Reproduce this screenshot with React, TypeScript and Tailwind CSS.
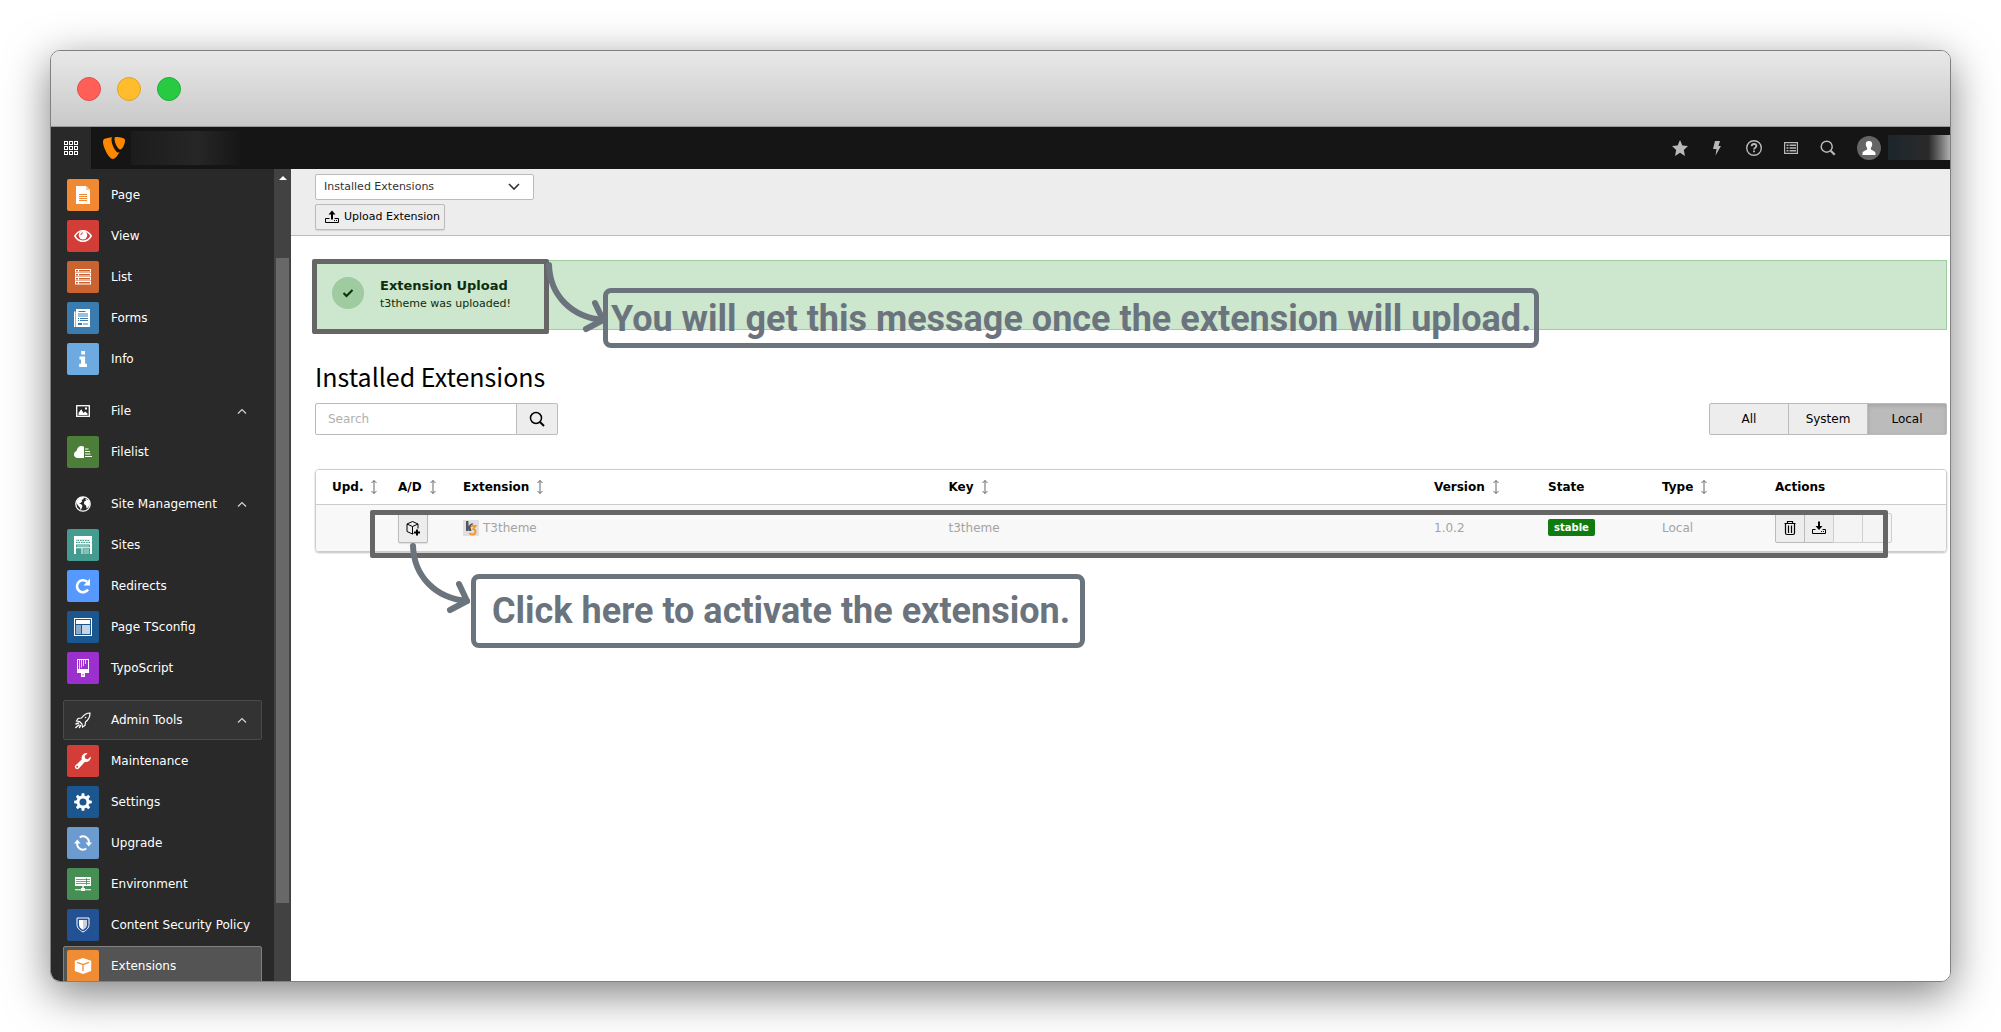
import type { ReactNode } from 'react'
import { clsx } from 'clsx'

function Svg({ size = 16, box = 16, className, children }: { size?: number; box?: number; className?: string; children: ReactNode }) {
  return (
    <svg width={size} height={size} viewBox={`0 0 ${box} ${box}`} fill="currentColor" className={clsx('shrink-0', className)} aria-hidden="true">
      {children}
    </svg>
  )
}

/* ---------- module icons, 18x18 ---------- */

const PageIcon = (
  <>
    <path d="M2 0h10l4 4v14H2z" />
    <path d="M12 0v4h4z" fill="#f8c79b" />
    <path d="M5 8.500h8M5 10.500h8M5 12.500h8M5 14.500h8" stroke="#f18832" strokeWidth="1" />
  </>
)

const ViewIcon = (
  <>
    <path d="M.8 9C3 5.300 5.800 3.800 9 3.800S15 5.300 17.200 9C15 12.700 12.200 14.200 9 14.200S3 12.700.8 9z" fill="none" stroke="currentColor" strokeWidth="1.500" />
    <circle cx="9" cy="8.200" r="4.200" />
    <path d="M6.800 8A2.300 2.300 0 0 1 9 5.800" fill="none" stroke="#d33d37" strokeWidth="1" />
  </>
)

const ListIcon = (
  <>
    {[1.5, 5.5, 9.5, 13.5].map((y) => (
      <g key={y}>
        <rect x="1.500" y={y} width="15" height="2.500" fill="none" stroke="currentColor" />
        <path d={`M4.500 ${y}v2.500`} stroke="currentColor" />
      </g>
    ))}
  </>
)

const FormsIcon = (
  <>
    <path d="M0 2.500h1.500V18H0zM2 0h14v18H2z" />
    <path d="M4.500 2.500h7" stroke="#3b7cb0" />
    <path d="M4 4h10v4H4z" fill="#9dbfd9" />
    <path d="M4 9.500h1M6 9.500h8M4 11.500h1M6 11.500h8" stroke="#3b7cb0" />
    <path d="M4 14h4v2H4z" fill="#3b7cb0" />
    <path d="M9 14h5v2H9z" fill="#9dbfd9" />
  </>
)

const InfoIcon = <path d="M7.200 1h3.800v3.600H7.200zM5.500 6.500h5.600v7.300h1.800V17H5.200v-3.200h1.900V9.600H5.500z" />

const FileIcon = (
  <>
    <rect x="2.700" y="3.700" width="12.600" height="10.600" fill="none" stroke="currentColor" strokeWidth="1.300" />
    <path d="M4.500 13V11l2.700-3.700L9.500 11l1.600-1.500 2.400 2V13z" />
    <path d="M11 5.500h2v2h-2z" />
  </>
)

const FilelistIcon = (
  <>
    <path d="M10 15H3.500A3.500 3.500 0 0 1 .8 9.200C1.500 8.300 2 8.200 2.600 8 2.800 5 5 3 7.500 3c1 0 1.800.3 2.500.8z" />
    <path d="M11 6h3.500M11 8.500h5M11 11h5.500M11 13.500h7" stroke="currentColor" strokeWidth="1.200" />
  </>
)

const GlobeIcon = (
  <>
    <circle cx="9" cy="9" r="7.200" fill="none" stroke="currentColor" strokeWidth="1.300" />
    <path d="M3 5.500 6 2.500l4-.5-.5 2L7.500 5l.8 1.200L6.500 8 5 8.300 7.500 9.500l1 1.500-1.700 4.500-1-3L4 10.500 2.500 8z" />
    <path d="m11 3.500 4 2L16 9l-1.500 3-1.800 1.500-.7-3L10 9l.2-2.500 2-1z" />
  </>
)

const SitesIcon = (
  <>
    <path d="M0 0h18v3H0z" />
    <path d="M0 3h18v5H0z" opacity=".85" />
    <path d="M1 4.500h16M2 6.500h14" stroke="#449c90" strokeDasharray="1.500 1" />
    <path d="M0 3h2v15H0zM16 3h2v15h-2zM2 7h14v1.500H2z" />
    <path d="M3 8.500h12V11H3z" fill="#86c0b8" />
    <path d="M2 11.300h14v1H2zM7.500 12h1v6h-1z" />
    <path d="M9.500 13H15v5H9.500z" fill="#86c0b8" />
  </>
)

const RedirectIcon = (
  <>
    <path d="M14 12.500A6 6 0 1 1 13 4.800" fill="none" stroke="currentColor" strokeWidth="2.600" />
    <path d="M16 1.500v7H9.500z" />
  </>
)

const TsconfigIcon = (
  <>
    <rect x=".5" y=".5" width="17" height="17" fill="none" stroke="currentColor" />
    <path d="M2 2h14v4H2z" />
    <path d="M2 7h5v9H2z" fill="#8dabc9" />
    <path d="M8 7h8v9H8z" fill="#c6d5e4" />
  </>
)

const TyposcriptIcon = (
  <>
    <rect x="3.500" y=".5" width="11" height="12" fill="none" stroke="currentColor" />
    <path d="M5.500 1v9M7.500 1v7.500M9.500 1v6M11.500 1v4" stroke="currentColor" opacity=".8" />
    <path d="M3 10h12v4H3zM7 14h4v4H7z" />
    <path d="M8.500 15h1v1.500h-1z" fill="#9b30cf" />
  </>
)

const RocketIcon = (
  <>
    <path d="M16 2c-3.500 0-6 1.500-8.500 5L4 7.500 2.500 10l3 .5 2.500 2.500.5 3L11 14.500l.5-3.500C15 8.500 16 5.500 16 2zM5.500 10.500 8 13" fill="none" stroke="currentColor" strokeWidth="1.200" />
    <path d="M11.500 6.500h.1M4.500 12l-2.500 1M5 14l-3.200 2.500M6.500 14.500l-1 2" stroke="currentColor" strokeWidth="1.400" strokeLinecap="round" />
  </>
)

const WrenchIcon = (
  <path d="M16.800 4.600 13.800 7.300l-2.700-.9-.4-2.500L13.600 1.200A5 5 0 0 0 7.800 7.600L1.600 13.200a2.200 2.200 0 0 0 3.200 3.200l6-6.400a5 5 0 0 0 6-5.400zM3.200 15.800a1 1 0 1 1 0-2 1 1 0 0 1 0 2z" />
)

const GearIcon = (
  <>
    <circle cx="9" cy="9" r="5" fill="none" stroke="currentColor" strokeWidth="3" />
    {[0, 45, 90, 135, 180, 225, 270, 315].map((a) => (
      <path key={a} d="M7.300 3.300 7.700.2h2.600l.4 3.100z" transform={`rotate(${a} 9 9)`} />
    ))}
  </>
)

const UpgradeIcon = (
  <>
    <path d="M3.300 8.500a5.800 5.800 0 0 0 9 6M14.700 9.500a5.800 5.800 0 0 0-9-6" fill="none" stroke="currentColor" strokeWidth="2" />
    <path d="m3.300 5.500 3.300 4H0zM14.700 12.500l-3.300-4H18z" />
  </>
)

const EnvironmentIcon = (
  <>
    <path d="M1 2h16v9H1z" />
    <path d="M2 4.500h14M2 6.500h14M2 8.500h14M12.500 3v7" stroke="#458f54" strokeWidth=".8" />
    <path d="M8.300 11h1.400v3H8.300zM1 14.200h16v1H1zM7 13h4v3H7z" />
  </>
)

const ShieldIcon = (
  <>
    <path d="M3 2h12v6.500c0 3.500-2.500 5.700-6 7.500-3.500-1.800-6-4-6-7.500z" fill="none" stroke="currentColor" />
    <path d="M5 4h4v10c-2.500-1.500-4-3-4-5.500z" />
    <path d="M9 4h4v4.500c0 2.500-1.500 4-4 5.500z" opacity=".75" />
  </>
)

const BoxIcon = (
  <>
    <path d="M9 1 17.200 3.700V14L9 17 .8 14V3.700z" />
    <path d="M3 5.300 9 7.500l6-2.200M9 7.500v6.500" fill="none" stroke="#f08c33" strokeWidth="1.300" />
  </>
)

type Item = { label: string; icon: ReactNode; tile?: string; active?: boolean }
type Group = { head?: Item; items: Item[] }

const GROUPS: Group[] = [
  {
    items: [
      { label: 'Page', icon: PageIcon, tile: 'bg-[#f18832]' },
      { label: 'View', icon: ViewIcon, tile: 'bg-[#d33d37]' },
      { label: 'List', icon: ListIcon, tile: 'bg-[#cb6331]' },
      { label: 'Forms', icon: FormsIcon, tile: 'bg-[#3b7cb0]' },
      { label: 'Info', icon: InfoIcon, tile: 'bg-[#6daae0]' },
    ],
  },
  {
    head: { label: 'File', icon: FileIcon },
    items: [{ label: 'Filelist', icon: FilelistIcon, tile: 'bg-[#4c7e3a]' }],
  },
  {
    head: { label: 'Site Management', icon: GlobeIcon },
    items: [
      { label: 'Sites', icon: SitesIcon, tile: 'bg-[#449c90]' },
      { label: 'Redirects', icon: RedirectIcon, tile: 'bg-[#5599ff]' },
      { label: 'Page TSconfig', icon: TsconfigIcon, tile: 'bg-[#1b568f]' },
      { label: 'TypoScript', icon: TyposcriptIcon, tile: 'bg-[#9b30cf]' },
    ],
  },
  {
    head: { label: 'Admin Tools', icon: RocketIcon, active: true },
    items: [
      { label: 'Maintenance', icon: WrenchIcon, tile: 'bg-[#d33d37]' },
      { label: 'Settings', icon: GearIcon, tile: 'bg-[#1b568f]' },
      { label: 'Upgrade', icon: UpgradeIcon, tile: 'bg-[#6b9bcf]' },
      { label: 'Environment', icon: EnvironmentIcon, tile: 'bg-[#458f54]' },
      { label: 'Content Security Policy', icon: ShieldIcon, tile: 'bg-[#225194]' },
      { label: 'Extensions', icon: BoxIcon, tile: 'bg-[#f08c33]', active: true },
    ],
  },
]

function MenuHead({ label, icon, active }: Item) {
  return (
    <button
      type="button"
      className={clsx(
        'flex h-10 w-full items-center gap-3 rounded-xs border px-[3px] text-left',
        active ? 'border-[#4a4a4a] bg-[#333333]' : 'border-transparent'
      )}
    >
      <span className="flex size-8 items-center justify-center">
        <Svg size={18} box={18}>{icon}</Svg>
      </span>
      <span className="flex-1">{label}</span>
      <Svg size={10} box={10} className="mr-[11px] text-gray-300">
        <path d="M1 7.500 5 3.500l4 4" fill="none" stroke="currentColor" strokeWidth="1.200" />
      </Svg>
    </button>
  )
}

function MenuItem({ label, icon, tile, active }: Item) {
  return (
    <a
      href="#"
      className={clsx(
        'flex h-10 items-center gap-3 rounded-xs border px-[3px]',
        active ? 'border-[#808080] bg-[#545454]' : 'border-transparent'
      )}
    >
      <span className={clsx('flex size-8 items-center justify-center rounded-xs text-white', tile)}>
        <Svg size={18} box={18}>{icon}</Svg>
      </span>
      {label}
    </a>
  )
}

function Sidebar() {
  return (
    <aside className="flex w-[240px] shrink-0 bg-[#292929] text-xs text-white">
      <nav className="flex flex-1 flex-col gap-3 overflow-hidden px-3 pt-1.5">
        {GROUPS.map((g, i) => (
          <div key={i} className="flex flex-col gap-px">
            {g.head && <MenuHead {...g.head} />}
            {g.items.map((item) => (
              <MenuItem key={item.label} {...item} />
            ))}
          </div>
        ))}
      </nav>
      {/* Scrollbar */}
      <div className="flex w-[17px] flex-col items-center bg-[#424242] pt-1.5">
        <Svg size={8} box={8} className="text-white">
          <path d="M0 5h8L4 1z" />
        </Svg>
        <div className="mt-[75px] h-[80%] w-[13px] bg-[#686868]" />
      </div>
    </aside>
  )
}

function Topbar() {
  const tool = 'flex w-[37px] items-center justify-center pb-px'
  return (
    <header className="flex h-[42px] shrink-0 items-stretch bg-[#151515] text-[#b9b9b9]">
      <button type="button" aria-label="Toggle menu" className="flex w-10 items-center justify-center bg-[#292929] pb-px text-white">
        <Svg size={14} box={14}>
          {[0.5, 5.5, 10.5].map((y) =>
            [0.5, 5.5, 10.5].map((x) => (
              <rect key={`${x}-${y}`} x={x} y={y} width="3" height="3" fill="none" stroke="currentColor" />
            ))
          )}
        </Svg>
      </button>
      <a href="#" aria-label="TYPO3" className="ml-3 flex items-center text-[#ff8700]">
        <Svg size={22} box={22}>
          <path d="M1 2C3 1 6 .5 9.500.2 8.500 1 8.500 1.800 8.500 3c0 4 4 12.500 6.500 12.500l1.500-.2C14.500 19 12 22 9.800 22 6 22 0 10 0 5 0 3.500.5 2.500 1 2z" />
          <path d="M13 0c4.500 0 9 .8 9 3.200 0 4.300-3 9.300-4.700 9.300C14.500 12.500 11.500 5 11.500 2 11.500.5 12 0 13 0z" />
        </Svg>
      </a>
      <div className="my-1 ml-1.5 w-28 bg-linear-to-r from-[#1c1c1c] via-[#262626] via-60% to-[#151515]" />
      <div className="ml-auto flex">
        <button type="button" aria-label="Bookmarks" className={tool}>
          <Svg>
            <path d="m8 0 2.400 5.500 5.600.6-4.200 3.800L13 16l-5-3.200L3 16l1.200-6.100L0 6.100l5.600-.6z" />
          </Svg>
        </button>
        <button type="button" aria-label="Clear cache" className={tool}>
          <Svg>
            <path d="M6 1h5L9.500 6H12L6.500 15.500 7.500 9H4z" />
          </Svg>
        </button>
        <button type="button" aria-label="Help" className={tool}>
          <Svg>
            <circle cx="8" cy="8" r="7.300" fill="none" stroke="currentColor" strokeWidth="1.400" />
            <path d="M5.700 6.300C5.700 4.800 6.600 4 8 4s2.400.8 2.400 2.100C10.400 7.600 8 7.700 8 9.600" fill="none" stroke="currentColor" strokeWidth="1.800" />
            <path d="M7.100 10.600h1.800v1.700H7.100z" />
          </Svg>
        </button>
        <button type="button" aria-label="Application information" className={tool}>
          <Svg>
            <rect x="1.600" y="2.600" width="12.800" height="10.800" fill="none" stroke="currentColor" strokeWidth="1.200" />
            <path d="M3.500 5.300h2M6.500 5.300h6.500M3.500 8h2M6.500 8h6.500M3.500 10.700h2M6.500 10.700h6.500" stroke="currentColor" strokeWidth="1.400" />
          </Svg>
        </button>
        <button type="button" aria-label="Search" className={tool}>
          <Svg>
            <circle cx="6.700" cy="6.700" r="5.500" fill="none" stroke="currentColor" strokeWidth="1.500" />
            <path d="m10.700 10.700 4 4" stroke="currentColor" strokeWidth="2.200" />
          </Svg>
        </button>
        <button type="button" aria-label="User" className="flex items-center pb-px pl-[11px]">
          <span className="mr-[7px] flex size-6 items-center justify-center rounded-full bg-[#656565] text-white">
            <Svg size={14} box={14}>
              <path d="M7 0c2 0 3.200 1.200 3.200 3.200 0 1.500-.5 2.600-1.300 3.500v1.500c0 1 4.600 1.300 4.600 4.300V14H.5v-1.500c0-3 4.600-3.300 4.600-4.300V6.700C4.300 5.800 3.800 4.700 3.800 3.200 3.800 1.200 5 0 7 0z" />
            </Svg>
          </span>
          <span className="h-[25px] w-[62px] bg-linear-to-r from-[#1d262b] via-[#2a2a2a] via-65% to-[#b0b0b0]" />
        </button>
      </div>
    </header>
  )
}

const trayButton = 'rounded-xs border border-[#bbbbbb] bg-[#ededed] text-black shadow-[0_1px_1px_rgba(0,0,0,0.1)]'

function DocHeader() {
  return (
    <div className="flex flex-col items-start gap-1 border-b border-[#bbbbbb] bg-[#ededed] py-[5px] pl-6 text-[11px]">
      <div className="relative">
        <select aria-label="Module view" className="h-[26px] w-[219px] appearance-none rounded-xs border border-[#bbbbbb] bg-white pl-2 text-[#333333]">
          <option>Installed Extensions</option>
        </select>
        <Svg size={12} box={12} className="pointer-events-none absolute top-[7px] right-3.5 text-[#333333]">
          <path d="m1 3 5 5 5-5" fill="none" stroke="currentColor" strokeWidth="1.600" />
        </Svg>
      </div>
      <button type="button" className={clsx(trayButton, 'flex h-[26px] items-center gap-1 pr-1 pl-2')}>
        <Svg>
          <path d="M8 1.500 4.500 5.500H7v5h2v-5h2.500z" />
          <path d="M5.500 9.500h-4v4h13v-4h-4M10 11.500h1M12 11.500h1" fill="none" stroke="currentColor" />
        </Svg>
        Upload Extension
      </button>
    </div>
  )
}

/* ---------- annotations drawn over the page ---------- */

function Highlight({ className }: { className: string }) {
  return <div className={clsx('pointer-events-none absolute rounded-xs border-[5px] border-[#666666]', className)} />
}

function Callout({ className, children }: { className: string; children: ReactNode }) {
  return (
    <div
      className={clsx(
        "absolute flex items-center rounded-lg border-[5px] border-[#6b747d] font-['Roboto',sans-serif] text-4xl font-bold whitespace-nowrap text-[#6b747d]",
        className
      )}
    >
      {children}
    </div>
  )
}

function Arrow({ className }: { className: string }) {
  return (
    <svg width="66" height="74" viewBox="0 0 66 74" fill="none" stroke="#6b747d" strokeWidth="6" strokeLinecap="round" className={clsx('absolute', className)} aria-hidden="true">
      <path d="M4 4C5 34 26 56 58 59" />
      <path d="M50 42 58 59 41 68" strokeLinejoin="round" />
    </svg>
  )
}

function Flash() {
  return (
    <div className="relative mt-6 h-[70px] border border-[#9fcca0] bg-[#cde6ce]">
      <div role="status" className="flex items-start gap-4 p-4 text-[#0b2e0c]">
        <span className="flex size-8 items-center justify-center rounded-full bg-[#9ecb9f]">
          <Svg size={12} box={12}>
            <path d="m1.500 6 3 3L10.500 3" fill="none" stroke="currentColor" strokeWidth="2" />
          </Svg>
        </span>
        <div>
          <div className="text-[13px] leading-[18px] font-bold">Extension Upload</div>
          <div className="text-[11px] leading-[18px]">t3theme was uploaded!</div>
        </div>
      </div>
      <Highlight className="-top-0.5 -left-1 h-[75px] w-[237px]" />
      <Arrow className="top-0 left-[229px]" />
      <Callout className="top-[27px] left-[287px] h-[60px] px-[3px] pt-0.5">You will get this message once the extension will upload.</Callout>
    </div>
  )
}

const COLUMNS = [
  { label: 'Upd.', sort: true, className: 'w-[74px] pl-4' },
  { label: 'A/D', sort: true, className: 'w-[65px] pl-2' },
  { label: 'Extension', sort: true, className: 'pl-2' },
  { label: 'Key', sort: true, className: 'pl-2' },
  { label: 'Version', sort: true, className: 'w-[114px] pl-2' },
  { label: 'State', sort: false, className: 'w-[114px] pl-2' },
  { label: 'Type', sort: true, className: 'w-[113px] pl-2' },
  { label: 'Actions', sort: false, className: 'w-[179px] pl-2' },
]

function ExtensionTable() {
  const action = 'flex h-[30px] w-[30px] items-center justify-center border border-[#bbbbbb]'
  return (
    <div className="relative mt-[34px]">
      <div className="overflow-hidden rounded-sm border border-[#cccccc] shadow-[0_1px_2px_rgba(0,0,0,0.25)]">
        <table className="w-full table-fixed border-collapse text-left text-xs">
          <thead>
            <tr className="h-[34px] border-b border-[#cccccc] bg-white">
              {COLUMNS.map((c) => (
                <th key={c.label} className={clsx('font-bold text-black', c.className)}>
                  <span className="flex items-center gap-[3px]">
                    {c.label}
                    {c.sort && (
                      <Svg className="text-[#666666]">
                        <path d="M8 1.500v13M5.500 4 8 1.500 10.500 4M5.500 12 8 14.500l2.500-2.500" fill="none" stroke="currentColor" />
                      </Svg>
                    )}
                  </span>
                </th>
              ))}
            </tr>
          </thead>
          <tbody>
            <tr className="h-[47px] bg-[#f8f8f8] text-[#a3a3a3]">
              <td />
              <td className="pl-2">
                <button type="button" aria-label="Activate" className={clsx(trayButton, 'flex size-[30px] items-center justify-center')}>
                  <Svg>
                    <path d="M8.500 13.500 7.500 14 2 11.500V4l5.500-2.500L13 4v4.500M2 4l5.500 2.500L13 4M7.500 6.500V14" fill="none" stroke="currentColor" />
                    <path d="M11 9.500h2v2h2v2h-2v2h-2v-2H9v-2h2z" />
                  </Svg>
                </button>
              </td>
              <td className="pl-2">
                <span className="flex items-center gap-1">
                  <Svg>
                    <path d="M0 0h16v16H0z" fill="#e0e0e2" />
                    <path d="M3 1h2.500v5L8 3.500h2.500L7.500 7l1 4H6L5.500 9v2H3z" fill="#55565a" />
                    <path d="M8 6h4.500L10.300 9c1.700.5 2.200 1.300 2.200 2.700 0 1.800-1.300 2.800-3.200 2.800-1.300 0-2.300-.5-3-1.500" fill="none" stroke="#f59a2a" strokeWidth="2" />
                  </Svg>
                  <span>T3theme</span>
                </span>
              </td>
              <td className="pl-2">t3theme</td>
              <td className="pl-2">1.0.2</td>
              <td className="pl-2">
                <span className="inline-block rounded-xs bg-[#107c10] px-1.5 text-[10px] leading-[17px] font-bold text-white">stable</span>
              </td>
              <td className="pl-2">Local</td>
              <td className="pl-2">
                <div className="flex -space-x-px text-black">
                  <button type="button" aria-label="Remove" className={clsx(action, 'rounded-l-xs bg-[#ededed]')}>
                    <Svg>
                      <path d="M2.500 3.500h11M5.500 3V1.500h5V3M3.500 4v9c0 1 .5 1.500 1.500 1.500h6c1 0 1.500-.5 1.500-1.500V4M6.500 5.500V13M9.500 5.500V13" fill="none" stroke="currentColor" strokeWidth="1.200" />
                    </Svg>
                  </button>
                  <button type="button" aria-label="Download" className={clsx(action, 'bg-[#ededed]')}>
                    <Svg>
                      <path d="M7 1.500h2V6h2.500L8 10 4.500 6H7z" />
                      <path d="M4.500 9.500h-3v4h13v-4h-3M10 11.500h1M12 11.500h1" fill="none" stroke="currentColor" />
                    </Svg>
                  </button>
                  <span className={clsx(action, 'border-[#cfcfcf] bg-[#f4f4f4]')} />
                  <span className={clsx(action, 'rounded-r-xs border-[#cfcfcf] bg-[#f4f4f4]')} />
                </div>
              </td>
            </tr>
          </tbody>
        </table>
      </div>
      <Highlight className="top-[41px] right-[59px] left-[55px] h-12" />
      <Arrow className="top-[73px] left-[94px]" />
      <Callout className="top-[105px] left-[156px] h-[74px] pr-2.5 pl-4">Click here to activate the extension.</Callout>
    </div>
  )
}

function Content() {
  const filter = 'h-8 w-20 border border-[#bbbbbb]'
  return (
    <main className="flex-1 bg-white">
      <DocHeader />
      <div className="pr-[3px] pl-6">
        <Flash />
        <h1 className="mt-[26px] font-['Noto_Sans_CJK_SC',sans-serif] text-[25px] leading-10 font-normal text-black">Installed Extensions</h1>
        <div className="mt-[7px] flex justify-between text-xs">
          <form className="flex">
            <input
              type="search"
              aria-label="Search"
              placeholder="Search"
              className="h-8 w-[202px] rounded-l-xs border border-[#bbbbbb] px-3 placeholder:text-[#b0b0b0]"
            />
            <button type="submit" aria-label="Submit search" className="-ml-px flex h-8 w-[42px] items-center justify-center rounded-r-xs border border-[#bbbbbb] bg-[#ededed]">
              <Svg>
                <circle cx="7" cy="7" r="5.500" fill="none" stroke="currentColor" strokeWidth="1.500" />
                <path d="m11 11 4 4" stroke="currentColor" strokeWidth="2" />
              </Svg>
            </button>
          </form>
          <div className="flex -space-x-px text-black">
            <button type="button" className={clsx(filter, 'rounded-l-xs bg-[#ededed]')}>All</button>
            <button type="button" className={clsx(filter, 'bg-[#ededed]')}>System</button>
            <button type="button" className={clsx(filter, 'rounded-r-xs bg-[#bbbbbb] shadow-[inset_0_2px_4px_rgba(0,0,0,0.12)]')}>Local</button>
          </div>
        </div>
        <ExtensionTable />
      </div>
    </main>
  )
}

export default function App() {
  return (
    <div className="flex h-screen bg-white p-[50px] font-['DejaVu_Sans',Verdana,sans-serif]">
      <div className="flex flex-1 flex-col overflow-hidden rounded-[10px] border border-[#808080] shadow-[0_12px_44px_rgba(0,0,0,0.5)]">
        {/* Window title bar */}
        <div className="flex h-[76px] shrink-0 items-center gap-4 border-b border-[#999999] bg-linear-to-b from-[#e8e8e8] to-[#c9c9c9] pl-[26px]">
          <span className="size-6 rounded-full border border-[#e0504a] bg-[#ff5f57]" />
          <span className="size-6 rounded-full border border-[#e0a225] bg-[#ffbd2e]" />
          <span className="size-6 rounded-full border border-[#1fad34] bg-[#28ca42]" />
        </div>
        <Topbar />
        <div className="flex min-h-0 flex-1">
          <Sidebar />
          <Content />
        </div>
      </div>
    </div>
  )
}
